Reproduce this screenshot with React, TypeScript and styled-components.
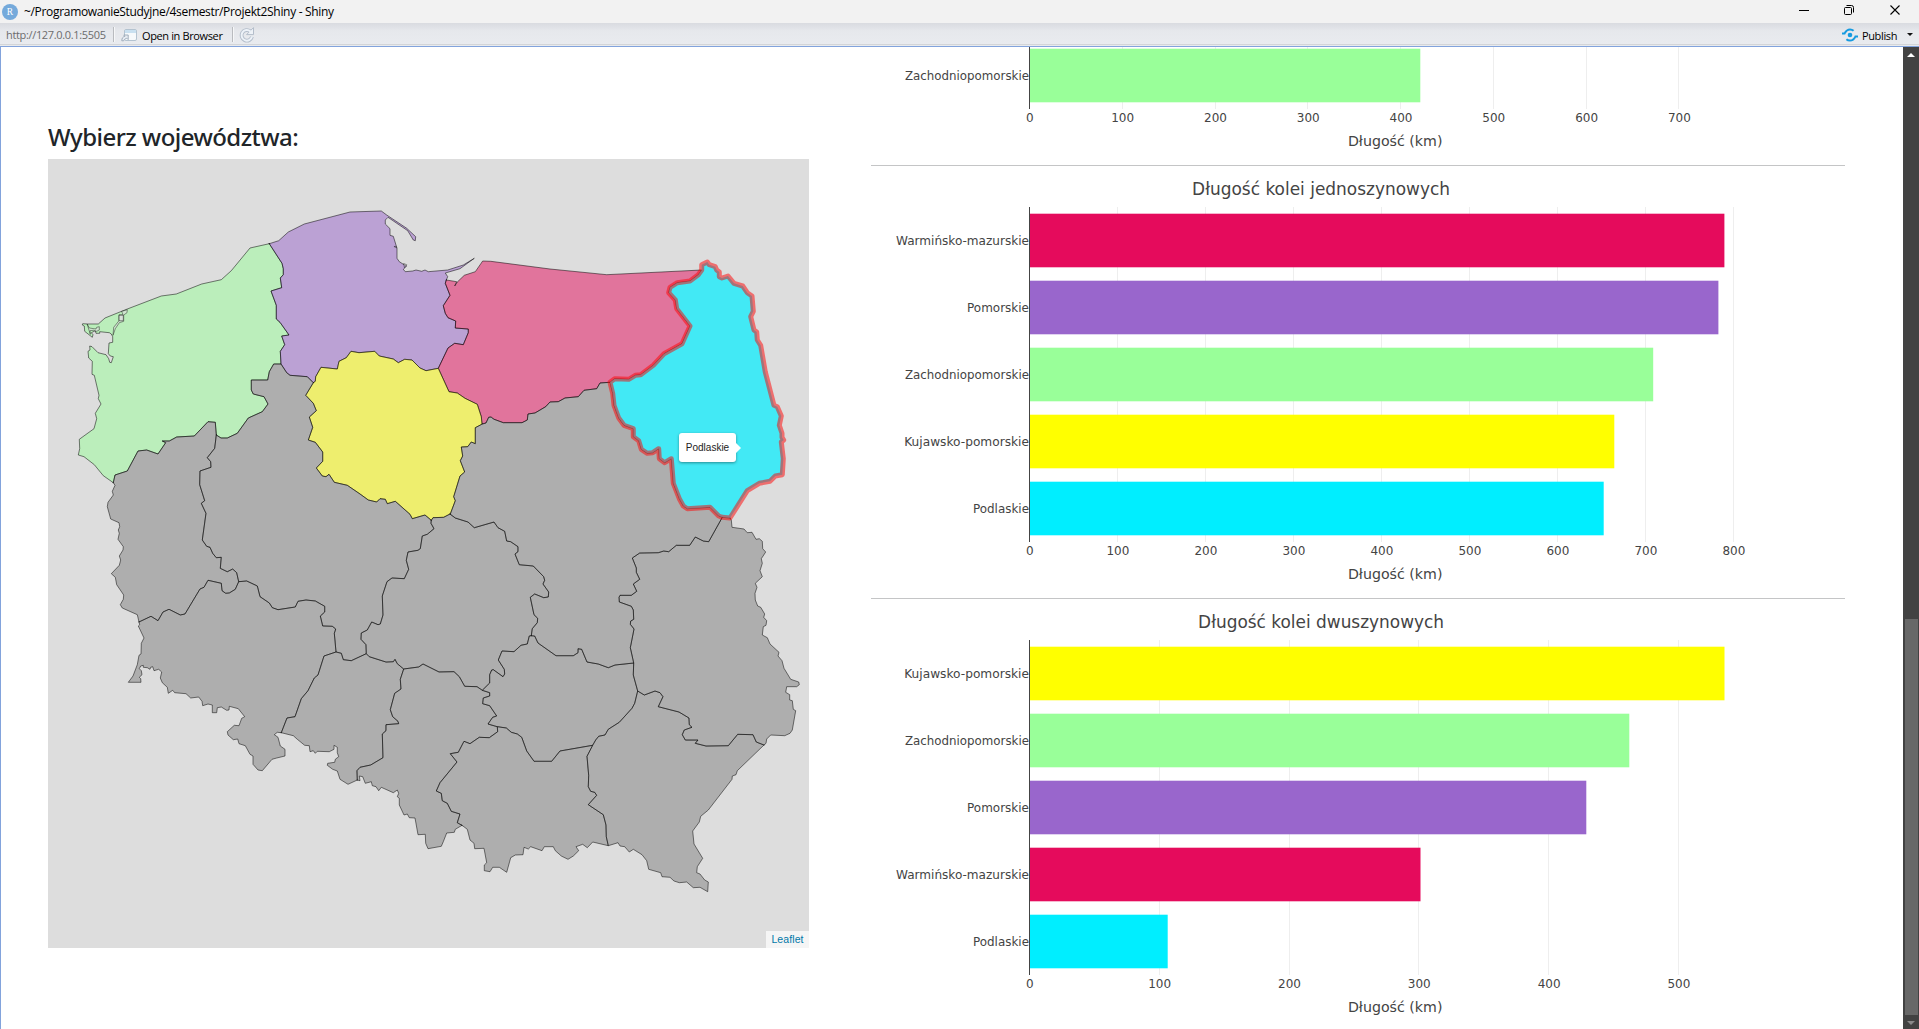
import React from "react";
import styled, { createGlobalStyle } from "styled-components";

const GlobalStyle = createGlobalStyle`
  html, body { margin: 0; padding: 0; background: #fff; overflow: hidden; }
  * { box-sizing: border-box; }
`;

const uiFont = `"Open Sans", "Noto Sans", sans-serif`;

/* ---------- window chrome ---------- */

const Window = styled.div`
  display: flex;
  flex-direction: column;
  width: 1919px;
  height: 1029px;
  overflow: hidden;
  background: #fff;
  font-family: ${uiFont};
`;

const TitleBar = styled.header`
  display: flex;
  align-items: center;
  height: 23px;
  flex: none;
  padding-left: 2px;
  background: #f2f2f2;
`;

const WindowTitle = styled.span`
  flex: 1;
  margin-left: 6px;
  font-size: 12px;
  line-height: 23px;
  letter-spacing: -0.32px;
  color: #000;
  white-space: nowrap;
`;

const WindowControls = styled.div`
  display: flex;
  align-items: center;
  gap: 34px;
  padding: 0 18px 3px 0;
`;

const Toolbar = styled.div`
  display: flex;
  align-items: center;
  height: 24px;
  flex: none;
  padding: 0 6px;
  background: linear-gradient(#d9dbe0 0, #e6e8ec 8px, #e9ebef 21px, #d3d5d8 21px, #d3d5d8 22px, #e8eaed 22px);
  border-bottom: 1px solid #82a3dc;
  font-size: 11px;
`;

const Address = styled.span`
  color: #6c6c6c;
  width: 107px;
  letter-spacing: -0.34px;
  white-space: nowrap;
`;

const Separator = styled.i<{ $gap: number }>`
  width: 2px;
  height: 15px;
  margin-right: ${(p) => p.$gap}px;
  background: linear-gradient(90deg, #b9bbbf 50%, #f6f7f8 50%);
`;

const ToolLabel = styled.span<{ $width: number; $gap: number }>`
  width: ${(p) => p.$width}px;
  margin-left: ${(p) => p.$gap}px;
  padding-top: 2px;
  color: #000;
  letter-spacing: -0.37px;
  white-space: nowrap;
`;

const Spacer = styled.div`
  flex: 1;
`;

/* ---------- page ---------- */

const Viewport = styled.div`
  display: flex;
  flex: 1;
  min-height: 0;
  border-left: 1px solid #82a3dc;
`;

const Page = styled.main`
  display: flex;
  flex: 1;
  min-width: 0;
  overflow: hidden;
`;

const MapColumn = styled.section`
  width: 870px;
  flex: none;
  padding: 74px 0 0 47px;
`;

const Heading = styled.h4`
  margin: 0;
  height: 38px;
  font-family: "Noto Sans", "Open Sans", sans-serif;
  font-size: 24px;
  line-height: 32px;
  font-weight: 500;
  letter-spacing: -0.55px;
  color: #212529;
  white-space: nowrap;
`;

const MapPane = styled.div`
  position: relative;
  width: 761px;
  height: 789px;
  background: #ddd;

  svg { display: block; }
`;

const Tooltip = styled.div`
  position: absolute;
  left: 631px;
  top: 274px;
  width: 57px;
  height: 29px;
  border-radius: 3px;
  background: #fff;
  box-shadow: 0 1px 3px rgba(0, 0, 0, 0.4);
  color: #222;
  font: 10px/30px "Liberation Sans", Arial, sans-serif;
  text-align: center;

  &::after {
    content: "";
    position: absolute;
    left: 57px;
    top: 10px;
    border: 5px solid transparent;
    border-left-color: #fff;
    border-right: 0;
  }
`;

const Attribution = styled.div`
  position: absolute;
  right: 0;
  bottom: 0;
  width: 43px;
  height: 17px;
  background: rgba(255, 255, 255, 0.7);
  color: #0078a8;
  font: 10.5px/17px "Liberation Sans", Arial, sans-serif;
  letter-spacing: 0.1px;
  text-align: center;
`;

const ChartColumn = styled.section`
  width: 974px;
  flex: none;
`;

const Figure = styled.figure<{ $scrolled?: number }>`
  height: 400px;
  margin: ${(p) => -(p.$scrolled ?? 0)}px 0 0;

  svg { display: block; overflow: visible; }
`;

const Divider = styled.hr`
  height: 1px;
  margin: 16px 0;
  border: 0;
  background: #c4c5c6;
`;

const Scrollbar = styled.div`
  display: flex;
  flex-direction: column;
  align-items: center;
  width: 16px;
  flex: none;
  background: #424242;
`;

const Arrow = styled.i<{ $down?: boolean }>`
  flex: none;
  width: 0;
  height: 0;
  border: 4px solid transparent;
  border-top: ${(p) => (p.$down ? "4px solid #8a8a8a" : "0")};
  border-bottom: ${(p) => (p.$down ? "0" : "4px solid #fff")};
  margin-top: 6px;
`;

const Thumb = styled.div`
  flex: none;
  width: 13px;
  height: 396px;
  margin: 562px 0 0 1px;
  background: #686868;
`;

/* ---------- charts ---------- */

type Bar = { name: string; width: number; end: number; color: string };

const GREEN = "#99ff99";
const PINK = "#e50b5c";
const PURPLE = "#9966cc";
const YELLOW = "#ffff00";
const CYAN = "#00eeff";
const GREY = "#808080";

const zach = (end: number): Bar => ({ name: "Zachodniopomorskie", width: 124, end, color: GREEN });
const warm = (end: number): Bar => ({ name: "Warmińsko-mazurskie", width: 133, end, color: PINK });
const pom = (end: number): Bar => ({ name: "Pomorskie", width: 62, end, color: PURPLE });
const kuj = (end: number): Bar => ({ name: "Kujawsko-pomorskie", width: 124.8, end, color: YELLOW });
const podl = (end: number): Bar => ({ name: "Podlaskie", width: 56, end, color: CYAN });

const ORIGIN = 158.5;
const PLOT_TOP = 25;
const SLOT = 67;
const chartFont = `"DejaVu Sans", Verdana, sans-serif`;

function BarChart({ title, titleWidth, bars, step, ticks, firstSlot = 0, scrolled }: {
  title?: string; titleWidth?: number; bars: Bar[]; step: number; ticks: number; firstSlot?: number; scrolled?: number;
}) {
  const tickList = Array.from({ length: ticks + 1 }, (_, i) => i);
  const bottom = PLOT_TOP + SLOT * 5;
  return (
    <Figure $scrolled={scrolled}>
      <svg width="974" height="400" fontFamily={chartFont} fill="#444">
        {tickList.slice(1).map((i) => (
          <rect key={i} x={Math.floor(ORIGIN + i * step)} y={PLOT_TOP} width="1" height={SLOT * 5} fill="#eee" />
        ))}
        {bars.map((b, i) => (
          <rect key={b.name} x={159} y={PLOT_TOP + (i + firstSlot) * SLOT + 6.7} width={b.end - 871 - 159} height={53.6} fill={b.color} />
        ))}
        <rect x="158" y={PLOT_TOP} width="1" height={SLOT * 5} />
        {bars.map((b, i) => (
          <text key={b.name} x="158" y={PLOT_TOP + (i + firstSlot) * SLOT + 38} textAnchor="end" fontSize="12" textLength={b.width} lengthAdjust="spacingAndGlyphs">{b.name}</text>
        ))}
        {tickList.map((i) => (
          <text key={i} x={ORIGIN + i * step + 0.4} y={bottom + 13} textAnchor="middle" fontSize="12">{i * 100}</text>
        ))}
        <text x="524.2" y={bottom + 37} textAnchor="middle" fontSize="14" textLength="94.5" lengthAdjust="spacingAndGlyphs">Długość (km)</text>
        {title && (
          <text x="450.1" y="13" textAnchor="middle" fontSize="17" textLength={titleWidth} lengthAdjust="spacingAndGlyphs">{title}</text>
        )}
      </svg>
    </Figure>
  );
}

/* ---------- map ---------- */

type Pt = [number, number];

/* Border points are stored in thirds of a pixel, relative to a tile corner. */
const tile = (ox: number, oy: number) => (s: string): Pt[] =>
  s.trim().split(/\s+/).map((p) => {
    const [x, y] = p.split(",").map(Number);
    return [ox + x / 3, oy + y / 3];
  });

const A = tile(40, 190);
const B = tile(260, 190);
const C = tile(430, 240);
const D = tile(590, 240);
const E = tile(60, 470);
const F = tile(340, 500);
const G = tile(570, 500);

const arcs = {
  zpSea: A("688,161 630,174 574,242 544,269 485,282 409,312 364,318 262,357 195,384 175,402 142,402 128,401 127,405 133,408 134,424 157,442 159,434 154,428 166,422 168,430 179,430 179,425 208,428 214,432 218,440 218,457 207,459 205,491 211,498 220,500 214,518 209,517 206,506 198,494 174,488 156,470 149,468 150,480 144,484 146,504 157,514 156,553 163,556 177,616 175,626 183,642 166,670 170,686 162,716 118,748 119,776 115,795 132,800 163,824 190,857 220,878"),
  zpPm: A("688,161 726,220 730,236 730,254 721,264 725,293 693,303 709,346 709,387 720,397 747,435 725,438 734,464 721,484 723,522"),
  zpWp: A("723,522 701,522 688,545 683,570 634,570 634,600 640,612 672,620 684,642 667,665 625,684 592,730 562,744 543,744 529,735"),
  zpLb: A("529,735 526,697 504,695 463,738 410,741 388,753 367,753 377,758 354,792 320,780 294,783 262,843 225,855 220,878"),
  pmSea: B("28,161 56,152 85,126 133,102 270,66 364,63 380,75 440,115 467,140 466,152 460,150 443,122 384,82 376,90 376,102 390,116 390,136 400,139 411,175 411,205 418,215 432,224 440,228 430,238 436,245 458,243 468,240 485,244 495,240 505,245 563,240 610,225 643,205 600,236 556,249 563,260 559,270"),
  pmWm: B("559,270 556,280 570,316 550,347 556,370 564,383 587,393 586,414 625,417 625,428 610,464 584,460 564,474 535,535"),
  pmKp: B("535,535 498,542 480,534 456,510 434,508 415,518 400,507 358,498 344,484 297,488 273,484 259,503 237,514 232,537 183,532 167,560 166,574 160,578"),
  pmWp: B("160,578 142,560 90,556 80,548 63,522"),
  kpWm: B("535,535 567,605 592,609 615,625 652,643 664,680 666,702"),
  kpWp: [
    ...B("160,578 137,616 160,640 169,662 148,681 158,712 145,750 166,757 188,786 188,814 169,834 187,858 198,860 207,853 223,877 262,886"),
    ...F("60,-18 85,0 110,6 120,-4 136,-2 142,11 166,4 210,43 217,56 255,45 274,61"),
  ],
  kpLd: F("274,61 279,53 311,52 330,42"),
  kpMz: C("61,822 76,782 71,770 90,708 104,696 91,662 98,648 94,621 113,620 124,606 136,611 136,563 157,552"),
  wmSea: [...C("49,120 80,125 74,138 82,126 103,106 136,95 158,63 182,64 360,87 530,104"), ...D("335,90")],
  wmPd: D("335,90 325,104 300,123 262,128 240,142 236,158 256,180 260,206 300,258 276,311 222,341 190,376 152,404 136,406 116,418 74,416 60,427"),
  wmMz: C("540,427 510,429 500,446 462,451 445,470 405,474 385,485 360,486 347,500 315,519 294,522 292,540 276,548 220,548 190,537 184,531 176,532 168,549 157,552"),
  pdOut: D("335,90 335,74 352,66 358,74 376,80 380,90 388,96 388,110 396,114 414,108 432,130 458,138 472,158 486,168 490,214 482,230 492,270 500,276 502,300 512,316 526,396 552,496 562,500 574,528 568,556 576,580 576,592 581,600 574,606 580,656 577,704 556,708 540,724 508,730 472,752 420,834"),
  pdLu: D("420,834 397,832"),
  pdMz: D("60,427 68,460 72,496 86,534 102,556 130,566 130,590 146,602 154,628 172,640 188,638 206,626 208,656 224,668 244,656 250,730 268,776 280,798 292,806 360,802 386,828 397,832"),
  lbOut: E("160,38 165,46 157,64 160,75 144,97 142,110 152,147 177,158 179,170 175,180 178,190 174,208 190,230 189,240 178,258 182,270 178,286 154,311 166,322 170,344 191,375 190,388 181,404 187,414 232,434 237,456"),
  lbWp: E("469,-105 464,-65 442,-37 452,-25 453,-8 420,3 419,44 434,92 424,100 438,130 427,210 440,229 450,232 458,250 469,263 484,262 481,295 502,305 518,297 530,308 536,335"),
  lbDs: E("536,335 526,358 508,369 497,370 486,362 484,340 444,331 432,352 420,357 375,432 361,435 327,418 309,426 294,452 273,439 237,456"),
  dsOut: E("237,456 239,464 235,468 252,504 244,520 243,552 237,556 232,584 219,618 205,637 243,637 242,626 238,622 246,614 244,602 238,596 242,588 250,586 250,592 262,593 270,598 272,592 278,590 282,602 296,598 305,606 301,624 307,638 322,652 325,670 338,661 344,668 378,671 392,684 416,681 426,694 428,707 444,702 457,705 457,728 470,728 472,713 484,711 500,721 507,720 508,709 535,716 554,740 545,745 537,767 523,766 502,785 504,795 520,809 533,807 537,821 556,827 570,853 579,858 579,883 594,900 607,902 636,868 650,864 675,858 675,838 661,828 654,802 643,794 652,787 664,788"),
  dsOp: E("664,788 681,744 705,740 724,686 744,662 763,624 774,615 792,558 828,546"),
  dsWp: E("536,335 560,333 592,348 600,380 628,399 637,413 654,419 706,411 714,394 738,390 766,393 794,409 794,426 781,438 788,468 817,469 827,477 823,490 828,546"),
  wpOp: F("-12,456 4,460 10,479 34,482 79,461"),
  opLd: F("79,461 88,470 138,486 160,485 165,478 172,491 191,507"),
  opSl: F("191,507 181,538 183,567 164,580 151,629 158,650 174,664 176,671 138,674 138,692 127,702 129,773 92,795 60,802 51,812 52,840"),
  opOut: E("664,788 700,797 712,808 734,826 748,827 750,845 760,842 766,850 772,844 808,845 822,838 822,826 832,832 832,848 836,860 826,868 824,877 803,880 802,886 818,898 832,903 840,928 864,943 892,930"),
  wpLd: F("274,61 273,70 282,86 262,103 247,108 241,146 234,151 204,156 199,181 206,208 193,236 156,234 141,245 127,288 129,345 121,372 114,374 95,366 82,390 64,399 63,418 78,434 79,461"),
  ldSl: F("191,507 236,501 249,492 297,516 342,515 358,530 374,559 411,560 427,571"),
  ldSk: F("427,571 449,549 449,524 455,510 460,509 489,530 494,522 493,508 475,480 486,453 522,455 543,436 562,432 568,408 574,407"),
  ldMz: F("330,42 346,54 384,66 403,83 462,66 474,83 494,94 500,123 512,125 534,140 534,155 525,162 538,194 580,198 611,230 614,241 609,252 626,276 625,291 611,293 584,282 571,292 582,344 593,355 592,368 577,386 574,407"),
  mzSk: F("574,407 584,408 594,429 648,467 700,467 714,458 714,446 725,448 741,486 775,492 805,503 825,495 881,489"),
  mzLu: G("457,52 416,125 400,123 376,111 359,136 319,136 296,155 281,153 265,158 209,159 187,174 199,204 199,217 209,238 190,252 200,274 184,286 150,286 147,292 148,306 184,319 190,330 191,358 182,363 181,373 192,387 181,443 191,489"),
  luSk: G("191,489 190,525 203,573"),
  skPk: G("203,573 194,610 186,625 148,667 115,688 105,705 86,709 77,720 68,736"),
  skMp: F("758,736 660,753 635,784 582,784 560,753 545,712 532,702 514,697 499,684 472,680"),
  slSk: F("427,571 449,578 449,588 430,594 428,611 449,617 470,648 458,652 444,672 472,680"),
  slMp: F("472,680 473,695 448,713 418,712 390,731 372,724 355,757 331,761 351,786 300,848 289,873 304,880 307,902 322,910 334,934 360,942 352,968 366,976"),
  slOut: F("52,840 60,842 58,828 68,830 76,850 94,845 97,857 108,860 116,872 124,862 160,878 172,870 176,880 172,890 178,895 178,915 192,945 202,942 208,953 225,954 234,1004 256,1003 257,1030 264,1046 304,1039 310,1025 320,999 343,997 346,988 366,976"),
  mpOut: F("366,976 382,988 390,1020 402,1030 404,1046 432,1045 440,1088 433,1095 433,1112 450,1115 458,1102 478,1102 500,1117 512,1073 526,1065 549,1064 552,1042 565,1047 572,1040 606,1052 613,1040 640,1040 646,1052 664,1068 684,1078 700,1068 716,1052 708,1040 728,1033 742,1043 758,1026 805,1037"),
  mpPk: F("758,736 741,769 746,826 745,860 752,874 764,877 770,886 745,914 790,944 798,975 799,1010 805,1037"),
  luPk: G("203,573 223,585 255,573 270,578 279,590 265,620 327,636 357,654 358,674 366,682 343,690 337,704 346,720 384,720 376,730 408,738 475,737 503,703 549,704 559,726 582,735"),
  luOut: G("480,54 484,60 486,82 522,87 532,98 546,97 558,118 568,116 577,124 578,146 587,156 574,176 577,190 570,212 577,230 556,250 561,262 555,280 556,300 563,318 572,322 584,342 581,352 590,362 588,376 580,380 577,405 592,413 600,432 627,457 624,468 636,482 642,505 662,538 686,546 688,554 680,560 650,560 647,577 659,584 659,600 667,602 670,628 677,632 667,690 660,700 644,707 602,705 590,717 588,730 582,735"),
  pkOut: G("582,735 502,812 498,824 487,828 486,838 415,930 392,949 388,966 368,993 372,1032 398,1075 382,1100 380,1118 390,1122 404,1140 415,1146 413,1175 390,1162 370,1163 350,1146 328,1148 312,1143 300,1132 276,1130 272,1118 236,1108 230,1082 216,1064 190,1048 178,1056 164,1040 150,1038 144,1028 115,1037"),
};

type ArcName = keyof typeof arcs;

const gap = (p: Pt, q: Pt) => Math.hypot(p[0] - q[0], p[1] - q[1]);

const toPath = (pts: Pt[]) => "M" + pts.map((p) => `${p[0].toFixed(1)} ${p[1].toFixed(1)}`).join("L") + "Z";

/* Chains shared borders into one closed outline, flipping those that run backwards. */
function outline(names: ArcName[]) {
  const first = arcs[names[0]];
  const next = arcs[names[1]];
  const ends = [next[0], next[next.length - 1]];
  const fromEnd = Math.min(...ends.map((p) => gap(first[first.length - 1], p)));
  const fromStart = Math.min(...ends.map((p) => gap(first[0], p)));
  const pts: Pt[] = fromEnd <= fromStart ? [...first] : [...first].reverse();
  names.slice(1).forEach((n) => {
    const arc = arcs[n];
    const last = pts[pts.length - 1];
    pts.push(...(gap(last, arc[0]) <= gap(last, arc[arc.length - 1]) ? arc : [...arc].reverse()));
  });
  return toPath(pts);
}

const provinces: { arcs: ArcName[]; color: string }[] = [
  { color: GREEN, arcs: ["zpSea", "zpLb", "zpWp", "zpPm"] },
  { color: PURPLE, arcs: ["pmSea", "pmWm", "pmKp", "pmWp", "zpPm"] },
  { color: PINK, arcs: ["wmSea", "wmPd", "wmMz", "kpWm", "pmWm"] },
  { color: YELLOW, arcs: ["pmKp", "kpWm", "kpMz", "kpLd", "kpWp"] },
  { color: GREY, arcs: ["lbOut", "lbDs", "lbWp", "zpLb"] },
  { color: GREY, arcs: ["zpWp", "pmWp", "kpWp", "wpLd", "wpOp", "dsWp", "lbWp"] },
  { color: GREY, arcs: ["dsOut", "dsOp", "dsWp", "lbDs"] },
  { color: GREY, arcs: ["opOut", "opSl", "opLd", "wpOp", "dsOp"] },
  { color: GREY, arcs: ["kpLd", "ldMz", "ldSk", "ldSl", "opLd", "wpLd"] },
  { color: GREY, arcs: ["slOut", "slMp", "slSk", "ldSl", "opSl"] },
  { color: GREY, arcs: ["mzSk", "luSk", "skPk", "skMp", "slSk", "ldSk"] },
  { color: GREY, arcs: ["mpOut", "mpPk", "skMp", "slMp"] },
  { color: GREY, arcs: ["pkOut", "mpPk", "skPk", "luPk"] },
  { color: GREY, arcs: ["luOut", "luPk", "luSk", "mzLu", "pdLu"] },
  { color: GREY, arcs: ["kpMz", "wmMz", "pdMz", "mzLu", "mzSk", "ldMz"] },
];

const lagoons = [
  A("246,364 262,359 261,368 251,375 251,394 238,398 226,416 219,436 221,412 237,392 237,374 248,374"),
  A("238,376 250,376 250,392 238,392"),
  A("142,403 148,414 168,417 170,412 178,410 178,420 170,424 160,421 150,422 151,432"),
  B("432,221 440,224 434,232"),
  B("403,170 410,174 409,170"),
];

function PolandMap() {
  return (
    <svg width="761" height="789" viewBox="48 159 761 789" strokeLinejoin="round" strokeLinecap="round">
      {provinces.map((p, i) => (
        <path key={i} d={outline(p.arcs)} fill={p.color} fillOpacity="0.5" stroke="#000" strokeOpacity="0.5" />
      ))}
      {lagoons.map((l, i) => (
        <path key={i} d={toPath(l)} fill="#ddd" fillOpacity="0.6" stroke="#000" strokeOpacity="0.4" />
      ))}
      <path d={outline(["pdOut", "pdLu", "pdMz", "wmPd"])} fill={CYAN} fillOpacity="0.7" stroke="#f00" strokeOpacity="0.5" strokeWidth="5" />
    </svg>
  );
}

/* ---------- icons ---------- */

const RLogo = () => (
  <svg width="16" height="22" viewBox="0 0 16 22">
    <circle cx="8" cy="11" r="8" fill="#75aadb" />
    <text x="8" y="14.2" textAnchor="middle" fontFamily="'Liberation Serif', serif" fontSize="9.5" fill="#fff">R</text>
  </svg>
);

const BrowserIcon = () => (
  <svg width="16" height="14" viewBox="0 0 16 14">
    <rect x="3.5" y="1.5" width="12" height="11" rx="1.5" fill="#f6f9fb" stroke="#b4c3d0" />
    <path d="M4 2h11v3H4z" fill="#c9e0f0" />
    <path d="M0.8 12.8c0-2.6 1-4 3-4.4L2.8 7h4.4v4.6L5.8 10.2c-1.6.4-2.6 1.2-3.2 2.6z" fill="#e8edf3" stroke="#9aa7b5" strokeWidth="0.9" />
  </svg>
);

const RefreshIcon = () => (
  <svg width="16" height="16" viewBox="0 0 16 16">
    <path d="M11.3 4.3A5.3 5.3 0 1 0 13 9.8" fill="none" stroke="#b3bdca" strokeWidth="3.8" />
    <path d="M14.5.6v7H7.6z" fill="#eef2f7" stroke="#b3bdca" strokeLinejoin="round" />
    <path d="M11.5 4.5A5.3 5.3 0 1 0 13 9.6" fill="none" stroke="#edf2f8" strokeWidth="2" />
  </svg>
);

const PublishIcon = () => (
  <svg width="16" height="14" viewBox="0 0 16 14" fill="none" stroke="#169be0" strokeWidth="2">
    <circle cx="8" cy="7" r="2.3" fill="#169be0" stroke="none" />
    <path d="M0 5.4H2.6C4 2.6 5.8 1.4 8 1.4c1.3 0 2.6.4 3.6 1.3" />
    <path d="M16 8.6h-2.6C12 11.4 10.2 12.6 8 12.6c-1.3 0-2.6-.4-3.6-1.3" />
  </svg>
);

const Controls = () => (
  <WindowControls>
    <svg width="12" height="12" viewBox="0 0 12 12" stroke="#000"><path d="M2 6.5h10" /></svg>
    <svg width="12" height="12" viewBox="0 0 12 12" stroke="#000" fill="none">
      <rect x="1.5" y="3.5" width="7" height="7" rx="1" />
      <path d="M3.5 1.5h5a2 2 0 0 1 2 2v5" />
    </svg>
    <svg width="12" height="12" viewBox="0 0 12 12" stroke="#000" strokeWidth="1.1"><path d="M1.5 1.5l9 9M10.5 1.5l-9 9" /></svg>
  </WindowControls>
);

const Caret = styled.i`
  border: 3px solid transparent;
  border-top-color: #111;
  border-bottom: 0;
`;

export default function App() {
  return (
    <Window>
      <GlobalStyle />
      <TitleBar>
        <RLogo />
        <WindowTitle>~/ProgramowanieStudyjne/4semestr/Projekt2Shiny - Shiny</WindowTitle>
        <Controls />
      </TitleBar>
      <Toolbar>
        <Address>http://127.0.0.1:5505</Address>
        <Separator $gap={6} />
        <BrowserIcon />
        <ToolLabel $width={90} $gap={5}>Open in Browser</ToolLabel>
        <Separator $gap={5} />
        <RefreshIcon />
        <Spacer />
        <PublishIcon />
        <ToolLabel $width={45} $gap={4}>Publish</ToolLabel>
        <Caret />
      </Toolbar>
      <Viewport>
        <Page>
          <MapColumn>
            <Heading>Wybierz województwa:</Heading>
            <MapPane>
              <PolandMap />
              <Tooltip>Podlaskie</Tooltip>
              <Attribution>Leaflet</Attribution>
            </MapPane>
          </MapColumn>
          <ChartColumn>
            <BarChart scrolled={298} firstSlot={4} bars={[zach(1420.3)]} step={92.78} ticks={7} />
            <Divider />
            <BarChart
              title="Długość kolei jednoszynowych" titleWidth={258} step={88} ticks={8}
              bars={[warm(1724.4), pom(1718.4), zach(1653.2), kuj(1614.3), podl(1603.7)]}
            />
            <Divider />
            <BarChart
              title="Długość kolei dwuszynowych" titleWidth={246} step={129.8} ticks={5}
              bars={[kuj(1724.5), zach(1629.3), pom(1586.3), warm(1420.5), podl(1167.7)]}
            />
          </ChartColumn>
        </Page>
        <Scrollbar>
          <Arrow />
          <Thumb />
          <Arrow $down />
        </Scrollbar>
      </Viewport>
    </Window>
  );
}
